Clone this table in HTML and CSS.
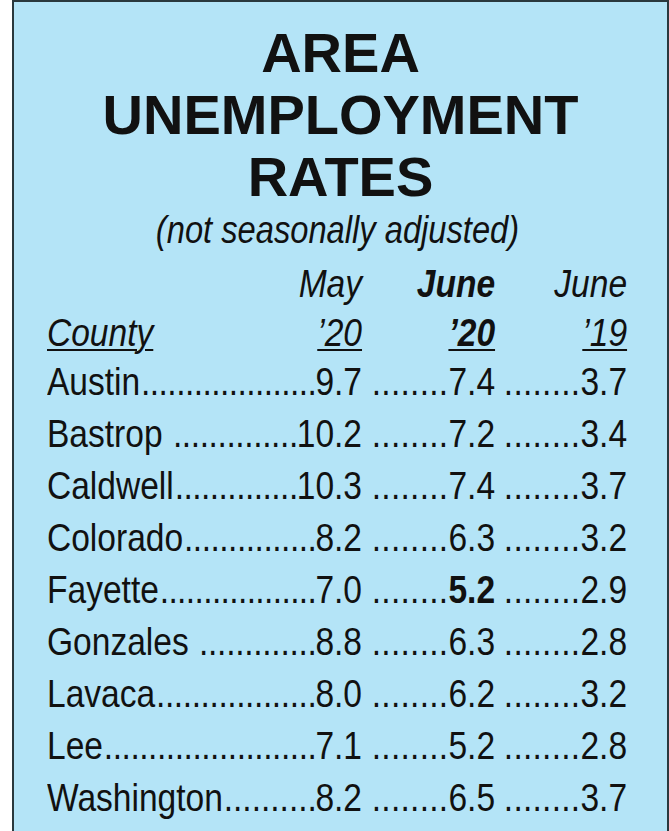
FILE: index.html
```html
<!DOCTYPE html>
<html lang="en">
<head>
<meta charset="utf-8">
<title>Area Unemployment Rates</title>
<link rel="stylesheet" href="styles.css">
</head>
<body>
<div class="sheet">
  <h1 class="title">AREA<br>UNEMPLOYMENT<br>RATES</h1>
  <div class="body">
    <p class="sub">(not seasonally adjusted)</p>
    <div class="row months">
      <div class="hcell"><span>May</span></div>
      <div class="hcell"><span class="b">June</span></div>
      <div class="hcell"><span>June</span></div>
    </div>
    <div class="row years">
      <div class="hcell split"><span class="u">County</span><span class="u">’20</span></div>
      <div class="hcell"><span class="u b">’20</span></div>
      <div class="hcell"><span class="u">’19</span></div>
    </div>

    <div class="row">
      <div class="cell"><span class="name">Austin</span><span class="fill"><span>.</span><span>.</span><span>.</span><span>.</span><span>.</span><span>.</span><span>.</span><span>.</span><span>.</span><span>.</span><span>.</span><span>.</span><span>.</span><span>.</span><span>.</span><span>.</span><span>.</span><span>.</span><span>.</span><span>.</span></span><span class="num">9.7</span></div>
      <div class="cell n"><span class="lead">........</span><span class="num">7.4</span></div>
      <div class="cell n"><span class="lead">........</span><span class="num">3.7</span></div>
    </div>
    <div class="row">
      <div class="cell"><span class="name">Bastrop</span><span class="fill gap"><span>.</span><span>.</span><span>.</span><span>.</span><span>.</span><span>.</span><span>.</span><span>.</span><span>.</span><span>.</span><span>.</span><span>.</span><span>.</span><span>.</span></span><span class="num">10.2</span></div>
      <div class="cell n"><span class="lead">........</span><span class="num">7.2</span></div>
      <div class="cell n"><span class="lead">........</span><span class="num">3.4</span></div>
    </div>
    <div class="row">
      <div class="cell"><span class="name">Caldwell</span><span class="fill"><span>.</span><span>.</span><span>.</span><span>.</span><span>.</span><span>.</span><span>.</span><span>.</span><span>.</span><span>.</span><span>.</span><span>.</span><span>.</span><span>.</span></span><span class="num">10.3</span></div>
      <div class="cell n"><span class="lead">........</span><span class="num">7.4</span></div>
      <div class="cell n"><span class="lead">........</span><span class="num">3.7</span></div>
    </div>
    <div class="row">
      <div class="cell"><span class="name">Colorado</span><span class="fill"><span>.</span><span>.</span><span>.</span><span>.</span><span>.</span><span>.</span><span>.</span><span>.</span><span>.</span><span>.</span><span>.</span><span>.</span><span>.</span><span>.</span><span>.</span></span><span class="num">8.2</span></div>
      <div class="cell n"><span class="lead">........</span><span class="num">6.3</span></div>
      <div class="cell n"><span class="lead">........</span><span class="num">3.2</span></div>
    </div>
    <div class="row">
      <div class="cell"><span class="name">Fayette</span><span class="fill"><span>.</span><span>.</span><span>.</span><span>.</span><span>.</span><span>.</span><span>.</span><span>.</span><span>.</span><span>.</span><span>.</span><span>.</span><span>.</span><span>.</span><span>.</span><span>.</span><span>.</span><span>.</span></span><span class="num">7.0</span></div>
      <div class="cell n"><span class="lead">........</span><span class="num b">5.2</span></div>
      <div class="cell n"><span class="lead">........</span><span class="num">2.9</span></div>
    </div>
    <div class="row">
      <div class="cell"><span class="name">Gonzales</span><span class="fill gap"><span>.</span><span>.</span><span>.</span><span>.</span><span>.</span><span>.</span><span>.</span><span>.</span><span>.</span><span>.</span><span>.</span><span>.</span><span>.</span></span><span class="num">8.8</span></div>
      <div class="cell n"><span class="lead">........</span><span class="num">6.3</span></div>
      <div class="cell n"><span class="lead">........</span><span class="num">2.8</span></div>
    </div>
    <div class="row">
      <div class="cell"><span class="name">Lavaca</span><span class="fill"><span>.</span><span>.</span><span>.</span><span>.</span><span>.</span><span>.</span><span>.</span><span>.</span><span>.</span><span>.</span><span>.</span><span>.</span><span>.</span><span>.</span><span>.</span><span>.</span><span>.</span><span>.</span></span><span class="num">8.0</span></div>
      <div class="cell n"><span class="lead">........</span><span class="num">6.2</span></div>
      <div class="cell n"><span class="lead">........</span><span class="num">3.2</span></div>
    </div>
    <div class="row">
      <div class="cell"><span class="name">Lee</span><span class="fill"><span>.</span><span>.</span><span>.</span><span>.</span><span>.</span><span>.</span><span>.</span><span>.</span><span>.</span><span>.</span><span>.</span><span>.</span><span>.</span><span>.</span><span>.</span><span>.</span><span>.</span><span>.</span><span>.</span><span>.</span><span>.</span><span>.</span><span>.</span><span>.</span></span><span class="num">7.1</span></div>
      <div class="cell n"><span class="lead">........</span><span class="num">5.2</span></div>
      <div class="cell n"><span class="lead">........</span><span class="num">2.8</span></div>
    </div>
    <div class="row">
      <div class="cell"><span class="name">Washington</span><span class="fill"><span>.</span><span>.</span><span>.</span><span>.</span><span>.</span><span>.</span><span>.</span><span>.</span><span>.</span><span>.</span></span><span class="num">8.2</span></div>
      <div class="cell n"><span class="lead">........</span><span class="num">6.5</span></div>
      <div class="cell n"><span class="lead">........</span><span class="num">3.7</span></div>
    </div>
  </div>
</div>
</body>
</html>
```
FILE: styles.css
```css
html, body {
  margin: 0;
  height: 100%;
  overflow: hidden;
  background: #ffffff;
}

.sheet {
  margin-left: 12px;
  height: 831px;
  box-sizing: border-box;
  border: 2px solid #2a383d;
  border-bottom: 0;
  background: #b4e4f7;
  color: #111111;
  font-family: "Liberation Sans", Arial, sans-serif;
}

.title {
  margin: 20px 0 0;
  font-size: 56px;
  line-height: 62px;
  font-weight: 700;
  text-align: center;
}

.body {
  width: 675.6px;
  margin-left: 33px;
  transform: scaleX(0.86);
  transform-origin: 0 0;
}

.sub {
  margin: 0;
  font-style: italic;
  font-size: 38px;
  line-height: 44px;
  text-align: center;
}

.row {
  display: grid;
  grid-template-columns: 366.3px 154.7px 153.5px;
  font-size: 39px;
  line-height: 52px;
}

.months {
  margin-top: 6px;
  font-style: italic;
}

.years {
  line-height: 46px;
  font-style: italic;
}

.hcell {
  display: flex;
  justify-content: flex-end;
  white-space: nowrap;
}

.hcell.split {
  justify-content: space-between;
}

.b {
  font-weight: 700;
}

.u {
  text-decoration: underline;
  text-decoration-thickness: 2px;
  text-underline-offset: 3px;
}

.cell {
  display: flex;
  white-space: nowrap;
}

.cell.n {
  padding-left: 6px;
}

.lead {
  flex: 1 0 auto;
  text-align: right;
  letter-spacing: 0.3px;
}

.fill {
  flex: 1 1 0;
  min-width: 0;
  display: flex;
  justify-content: space-between;
  padding-left: 1px;
}

.fill.gap {
  padding-left: 12px;
}

.fill > span {
  flex: none;
  width: 9px;
}
```
